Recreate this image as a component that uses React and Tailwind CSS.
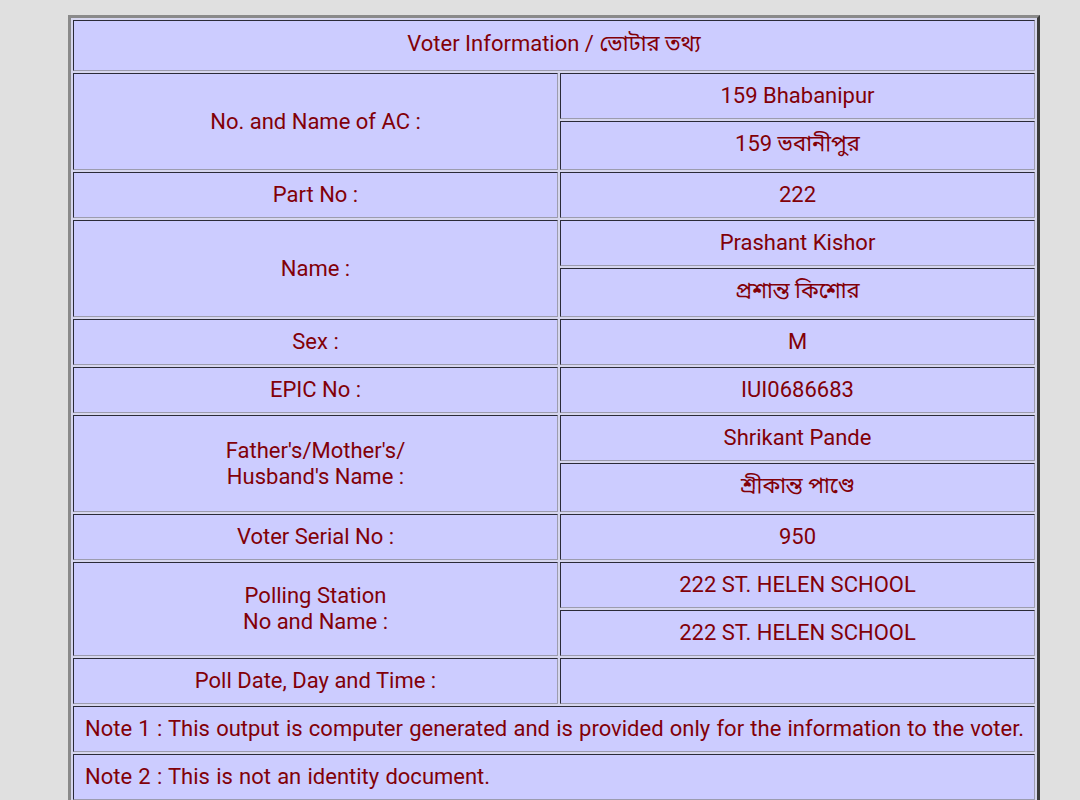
import React from "react";

const cell =
  "bg-[#ccccff] border border-t-[#2a2a38] border-l-[#2a2a38] border-b-[#9c9cae] border-r-[#9c9cae] flex items-center justify-center text-center";

function Label({ children, span }) {
  return (
    <div className={`${cell} ${span ? "row-span-2" : ""} leading-[26px]`}>
      <div>{children}</div>
    </div>
  );
}

function Val({ children, tall }) {
  return <div className={`${cell} ${tall ? "h-[49px] pb-[3px]" : "h-[46px]"}`}>{children}</div>;
}

export default function App() {
  return (
    <div
      className="min-h-screen bg-[#e0e0e0] pt-[15px] text-[22px] leading-[26px] text-[#820008]"
      style={{ fontFamily: 'Roboto, "Noto Sans Bengali", "Noto Sans", "DejaVu Sans", sans-serif' }}
    >
      <div className="ml-[68px] w-[972px] border-[3px] border-t-[#8a8a8a] border-l-[#8a8a8a] border-b-[#3a3a3a] border-r-[#3a3a3a] bg-[#d6d6ee] p-[2px]">
        <div className="grid grid-cols-[485px_475px] gap-[2px]">
          <div className={`${cell} col-span-2 h-[51px] pb-[3px]`}>Voter Information / ভোটার তথ্য</div>

          <Label span>No. and Name of AC :</Label>
          <Val>159 Bhabanipur</Val>
          <Val tall>159 ভবানীপুর</Val>

          <Label>Part No :</Label>
          <Val>222</Val>

          <Label span>Name :</Label>
          <Val>Prashant Kishor</Val>
          <Val tall>প্রশান্ত কিশোর</Val>

          <Label>Sex :</Label>
          <Val>M</Val>

          <Label>EPIC No :</Label>
          <Val>IUI0686683</Val>

          <Label span>
            Father's/Mother's/
            <br />
            Husband's Name :
          </Label>
          <Val>Shrikant Pande</Val>
          <Val tall>শ্রীকান্ত পাণ্ডে</Val>

          <Label>Voter Serial No :</Label>
          <Val>950</Val>

          <Label span>
            Polling Station
            <br />
            No and Name :
          </Label>
          <Val>222 ST. HELEN SCHOOL</Val>
          <Val>222 ST. HELEN SCHOOL</Val>

          <Label>Poll Date, Day and Time :</Label>
          <Val></Val>

          <div className={`${cell} col-span-2 h-[46px] !justify-start pl-[11px] [word-spacing:0.75px]`}>
            Note 1 : This output is computer generated and is provided only for the information to the voter.
          </div>
          <div className={`${cell} col-span-2 h-[46px] !justify-start pl-[11px] [word-spacing:0.75px]`}>
            Note 2 : This is not an identity document.
          </div>
        </div>
      </div>
    </div>
  );
}
